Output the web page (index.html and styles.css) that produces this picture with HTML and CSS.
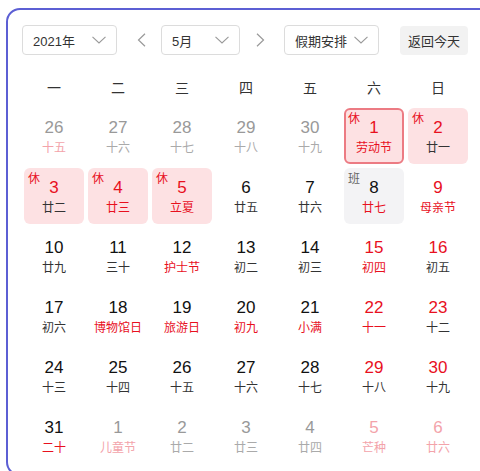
FILE: index.html
```html
<!DOCTYPE html>
<html lang="zh">
<head>
<meta charset="utf-8">
<link rel="stylesheet" href="styles.css">
</head>
<body>
<div class="calendar">
  <div class="toolbar">
    <div class="select year"><span>2021年</span><svg class="chev" width="14" height="8" viewBox="0 0 14 8"><path d="M0.5 0.8 L7 7 L13.5 0.8" fill="none" stroke="#999" stroke-width="1.1"/></svg></div>
    <div class="nav prev"><svg width="9" height="14" viewBox="0 0 9 14"><path d="M8 0.8 L1.5 7 L8 13.2" fill="none" stroke="#999" stroke-width="1.2"/></svg></div>
    <div class="select month"><span>5月</span><svg class="chev" width="14" height="8" viewBox="0 0 14 8"><path d="M0.5 0.8 L7 7 L13.5 0.8" fill="none" stroke="#999" stroke-width="1.1"/></svg></div>
    <div class="nav next"><svg width="9" height="14" viewBox="0 0 9 14"><path d="M1 0.8 L7.5 7 L1 13.2" fill="none" stroke="#999" stroke-width="1.2"/></svg></div>
    <div class="select holiday"><span>假期安排</span><svg class="chev" width="14" height="8" viewBox="0 0 14 8"><path d="M0.5 0.8 L7 7 L13.5 0.8" fill="none" stroke="#999" stroke-width="1.1"/></svg></div>
    <div class="today">返回今天</div>
  </div>
  <div class="weekdays">
    <div>一</div><div>二</div><div>三</div><div>四</div><div>五</div><div>六</div><div>日</div>
  </div>
  <div class="grid">
    <div class="cell"><div class="num n-gray">26</div><div class="lunar l-pink">十五</div></div>
    <div class="cell"><div class="num n-gray">27</div><div class="lunar l-gray">十六</div></div>
    <div class="cell"><div class="num n-gray">28</div><div class="lunar l-gray">十七</div></div>
    <div class="cell"><div class="num n-gray">29</div><div class="lunar l-gray">十八</div></div>
    <div class="cell"><div class="num n-gray">30</div><div class="lunar l-gray">十九</div></div>
    <div class="cell rest sel"><span class="tag">休</span><div class="num n-red">1</div><div class="lunar l-red">劳动节</div></div>
    <div class="cell rest"><span class="tag">休</span><div class="num n-red">2</div><div class="lunar">廿一</div></div>

    <div class="cell rest"><span class="tag">休</span><div class="num n-red">3</div><div class="lunar">廿二</div></div>
    <div class="cell rest"><span class="tag">休</span><div class="num n-red">4</div><div class="lunar l-red">廿三</div></div>
    <div class="cell rest"><span class="tag">休</span><div class="num n-red">5</div><div class="lunar l-red">立夏</div></div>
    <div class="cell"><div class="num">6</div><div class="lunar">廿五</div></div>
    <div class="cell"><div class="num">7</div><div class="lunar">廿六</div></div>
    <div class="cell work"><span class="tag tag-work">班</span><div class="num">8</div><div class="lunar l-red">廿七</div></div>
    <div class="cell"><div class="num n-red">9</div><div class="lunar l-red">母亲节</div></div>

    <div class="cell"><div class="num">10</div><div class="lunar">廿九</div></div>
    <div class="cell"><div class="num">11</div><div class="lunar">三十</div></div>
    <div class="cell"><div class="num">12</div><div class="lunar l-red">护士节</div></div>
    <div class="cell"><div class="num">13</div><div class="lunar">初二</div></div>
    <div class="cell"><div class="num">14</div><div class="lunar">初三</div></div>
    <div class="cell"><div class="num n-red">15</div><div class="lunar l-red">初四</div></div>
    <div class="cell"><div class="num n-red">16</div><div class="lunar">初五</div></div>

    <div class="cell"><div class="num">17</div><div class="lunar">初六</div></div>
    <div class="cell"><div class="num">18</div><div class="lunar l-red">博物馆日</div></div>
    <div class="cell"><div class="num">19</div><div class="lunar l-red">旅游日</div></div>
    <div class="cell"><div class="num">20</div><div class="lunar l-red">初九</div></div>
    <div class="cell"><div class="num">21</div><div class="lunar l-red">小满</div></div>
    <div class="cell"><div class="num n-red">22</div><div class="lunar l-red">十一</div></div>
    <div class="cell"><div class="num n-red">23</div><div class="lunar">十二</div></div>

    <div class="cell"><div class="num">24</div><div class="lunar">十三</div></div>
    <div class="cell"><div class="num">25</div><div class="lunar">十四</div></div>
    <div class="cell"><div class="num">26</div><div class="lunar">十五</div></div>
    <div class="cell"><div class="num">27</div><div class="lunar">十六</div></div>
    <div class="cell"><div class="num">28</div><div class="lunar">十七</div></div>
    <div class="cell"><div class="num n-red">29</div><div class="lunar">十八</div></div>
    <div class="cell"><div class="num n-red">30</div><div class="lunar">十九</div></div>

    <div class="cell"><div class="num">31</div><div class="lunar l-red">二十</div></div>
    <div class="cell"><div class="num n-gray">1</div><div class="lunar l-pink">儿童节</div></div>
    <div class="cell"><div class="num n-gray">2</div><div class="lunar l-gray">廿二</div></div>
    <div class="cell"><div class="num n-gray">3</div><div class="lunar l-gray">廿三</div></div>
    <div class="cell"><div class="num n-gray">4</div><div class="lunar l-gray">廿四</div></div>
    <div class="cell"><div class="num n-pink">5</div><div class="lunar l-pink">芒种</div></div>
    <div class="cell"><div class="num n-pink">6</div><div class="lunar l-pink">廿六</div></div>
  </div>
</div>
</body>
</html>
```
FILE: styles.css
```css
html, body {
  margin: 0;
  padding: 0;
  overflow: hidden;
  background: #fff;
}
body {
  font-family: "Liberation Sans", "Noto Sans CJK SC", sans-serif;
  color: #333;
}
.calendar {
  box-sizing: border-box;
  margin: 8px 0 0 6px;
  width: 500px;
  height: 468px;
  border: 2px solid #5c5fd4;
  border-radius: 14px;
  padding: 15px 0 0 14px;
}
.toolbar {
  display: flex;
  align-items: center;
  height: 30px;
}
.select {
  box-sizing: border-box;
  height: 30px;
  border: 1px solid #dcdcdc;
  border-radius: 4px;
  display: flex;
  align-items: center;
  justify-content: space-between;
  padding: 0 10px;
  font-size: 13px;
  color: #333;
}
.year { width: 95px; }
.month { width: 79px; }
.holiday { width: 95px; }
.chev { display: block; }
.nav {
  width: 44px;
  height: 30px;
  display: flex;
  align-items: center;
  justify-content: center;
}
.nav svg { display: block; }
.prev { padding-left: 5px; box-sizing: border-box; }
.next { padding-right: 4px; box-sizing: border-box; }
.today {
  margin-left: 21px;
  width: 68px;
  height: 29px;
  box-sizing: border-box;
  background: #f2f2f2;
  border-radius: 4px;
  font-size: 13px;
  color: #333;
  display: flex;
  align-items: center;
  justify-content: center;
}
.weekdays {
  margin: 14px 0 0 2px;
  width: 448px;
  height: 36px;
  display: grid;
  grid-template-columns: repeat(7, 64px);
  align-items: center;
  font-size: 14px;
  color: #333;
  text-align: center;
  font-family: "Noto Sans CJK SC", sans-serif;
}
.weekdays div { width: 60px; }
.grid {
  margin: 3px 0 0 2px;
  display: grid;
  grid-template-columns: repeat(7, 60px);
  grid-auto-rows: 56px;
  column-gap: 4px;
  row-gap: 4px;
}
.cell {
  position: relative;
  box-sizing: border-box;
  border-radius: 6px;
  padding-top: 10px;
  text-align: center;
}
.rest { background: #fde1e3; }
.work { background: #f3f3f5; }
.sel { border: 2px solid #ec7b83; padding-top: 8px; }
.sel .tag { top: 1px; left: 2px; }
.tag {
  position: absolute;
  top: 3px;
  left: 4px;
  font-size: 12px;
  line-height: 14px;
  color: #e8101e;
  font-family: "Noto Sans CJK SC", sans-serif;
}
.tag-work { color: #666; }
.num {
  height: 20px;
  line-height: 20px;
  font-size: 17px;
  color: #111;
  font-family: "Liberation Sans", Arial, sans-serif;
}
.lunar {
  height: 18px;
  line-height: 18px;
  font-size: 12px;
  color: #333;
  font-family: "Noto Sans CJK SC", sans-serif;
  white-space: nowrap;
}
.n-red { color: #e8101e; }
.n-gray { color: #999; }
.n-pink { color: #f3a3aa; }
.l-red { color: #e8101e; }
.l-gray { color: #aaa; }
.l-pink { color: #f3a3aa; }
```
